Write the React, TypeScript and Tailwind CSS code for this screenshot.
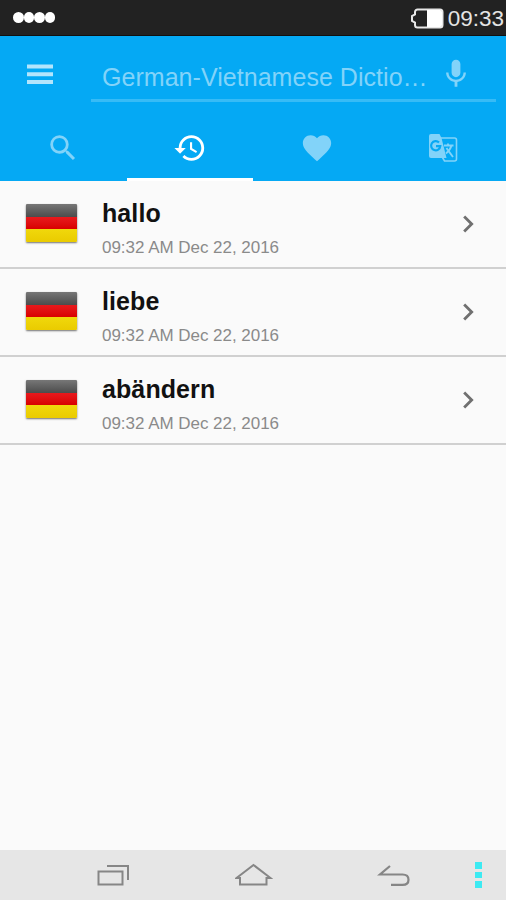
import { clsx } from "clsx";
import type { ReactNode } from "react";
import { MdChevronRight, MdFavorite, MdHistory, MdSearch } from "react-icons/md";

const history = [
    { word: "hallo", date: "09:32 AM Dec 22, 2016" },
    { word: "liebe", date: "09:32 AM Dec 22, 2016" },
    { word: "abändern", date: "09:32 AM Dec 22, 2016" },
];

const StatusBar = () => {
    return (
        <div className="flex h-9 shrink-0 items-center justify-between border-b border-[#111] bg-[#222] pr-0.5 pl-[13px]">
            <div className="flex">
                {Array.from({ length: 4 }, (_, i) => (
                    <span key={i} className="size-[10.600px] rounded-full bg-white" />
                ))}
            </div>
            <div className="flex items-center gap-1 pt-px">
                <svg width="34" height="21" viewBox="0 0 34 21" fill="none">
                    <path d="M7.500 1.500H30a2.500 2.500 0 0 1 2.500 2.500v13a2.500 2.500 0 0 1-2.500 2.500H7.500a2.500 2.500 0 0 1-2.500-2.500V14.500L2 13V8l3-1.500V4a2.500 2.500 0 0 1 2.500-2.500z" stroke="#e8e8e8" strokeWidth="2" />
                    <path d="M17 2h13a2 2 0 0 1 2 2v13a2 2 0 0 1-2 2H17z" fill="#fff" />
                </svg>
                <span className="pt-0.5 text-[22.500px] leading-6 text-[#e4e4e4]">09:33</span>
            </div>
        </div>
    );
};

const Tab = ({ active = false, children }: { active?: boolean; children: ReactNode }) => {
    return (
        <button className={clsx("flex h-full flex-1 items-center justify-center border-b-[3px] pt-[3px] text-[34px]", active ? "border-white text-white" : "border-transparent text-[#82d3f9]")}>
            {children}
        </button>
    );
};

const MicIcon = ({ className }: { className?: string }) => {
    return (
        <svg className={className} viewBox="0 0 24 24" fill="currentColor">
            <path d="M12 14.300c1.700 0 3.100-1.400 3.100-3.100V5a3.100 3.100 0 0 0-6.200 0v6.200c0 1.700 1.400 3.100 3.100 3.100zm5.300-3.300c0 3-2.540 5.100-5.300 5.100S6.700 14 6.700 11H5c0 3.410 2.720 6.230 6 6.720V21h2v-3.280c3.280-.480 6-3.300 6-6.720h-1.700z" />
        </svg>
    );
};

// two overlapping sheets, the back one outlined
const TranslateIcon = () => {
    return (
        <svg width="30" height="30" viewBox="0 0 30 30" fill="none">
            <path d="M13 5H26.500a2 2 0 0 1 2 2V26a2 2 0 0 1-2 2H16.500L13 22" stroke="currentColor" strokeWidth="1.600" />
            <path d="M3 1H11.500L13.500 5L18.500 25H3a2 2 0 0 1-2-2V3a2 2 0 0 1 2-2z" fill="currentColor" />
            <path d="M11 9.500A4.600 4.600 0 1 0 12.300 13.200H8" stroke="#05a9f4" strokeWidth="2.200" />
            <path d="M16 12.500H25.500M20 10.500V12.500M23.500 12.500C22.500 16 20 19 18 20.500M18.500 15C20.500 18 22 20 25 24" stroke="currentColor" strokeWidth="1.900" />
        </svg>
    );
};

const Header = () => {
    return (
        <header className="flex h-[145px] shrink-0 flex-col bg-[#05a9f4]">
            <div className="flex h-[78px] shrink-0 items-start pt-[10px]">
                <svg className="mt-[18px] ml-[27px] text-[#b4e5fc]" width="26" height="21" viewBox="0 0 26 21" fill="currentColor">
                    <path d="M0 .5h26v4H0zM0 8.300h26v4H0zM0 16.100h26v4H0z" />
                </svg>
                <div className="mr-[10px] ml-[38px] flex h-14 flex-1 items-start border-b-[3px] border-[#37bbf6] pl-[11px]">
                    <span className="mt-[16px] text-[25px] leading-[30px] tracking-[0.040px] whitespace-nowrap text-[#82d3f9]">German-Vietnamese Dictio…</span>
                    <MicIcon className="mt-[11px] mr-[23px] ml-auto size-[34px] shrink-0 text-[#82d3f9]" />
                </div>
            </div>
            <nav className="flex flex-1">
                <Tab>
                    <MdSearch />
                </Tab>
                <Tab active>
                    <MdHistory />
                </Tab>
                <Tab>
                    <MdFavorite className="ml-px" />
                </Tab>
                <Tab>
                    <TranslateIcon />
                </Tab>
            </nav>
        </header>
    );
};

const GermanFlag = () => {
    return (
        <div className="flex h-[38px] w-[51px] flex-col overflow-hidden rounded-[1px] shadow-[0_1px_2px_rgba(0,0,0,0.55)]">
            <div className="flex-1 bg-linear-to-b from-[#777] to-[#4c4c4c]" />
            <div className="flex-1 bg-linear-to-b from-[#e8191c] to-[#d80000]" />
            <div className="flex-1 bg-linear-to-b from-[#f0d80c] to-[#eacb00]" />
        </div>
    );
};

const HistoryRow = ({ word, date }: { word: string; date: string }) => {
    return (
        <li className="flex h-[88px] items-start border-b-2 border-[#d0d0d0] pr-[21px] pl-[25.500px]">
            <div className="mt-[23px]">
                <GermanFlag />
            </div>
            <div className="ml-[25.500px] flex-1 pt-[17px]">
                <div className="text-[25px] leading-[30px] font-bold tracking-[0.100px] text-[#111]">{word}</div>
                <div className="mt-[10px] text-[17px] leading-5 tracking-[-0.030px] text-[#8a8a8a]">{date}</div>
            </div>
            <MdChevronRight className="mt-[26px] size-[34px] text-[#707070]" />
        </li>
    );
};

const NavigationBar = () => {
    return (
        <footer className="flex h-[50px] shrink-0 items-center bg-[#e6e6e6] pl-[97px]">
            <svg width="32" height="24" viewBox="0 0 32 24" fill="none" stroke="#868686" strokeWidth="2">
                <path d="M1.500 8.500h24v13h-24z" />
                <path d="M10 3H31V17" />
            </svg>
            <svg className="ml-[106px]" width="38" height="24" viewBox="0 0 38 24" fill="none" stroke="#868686" strokeWidth="2">
                <path d="M1.500 15L18.500 2l17 13h-4v6.500H5V15z" />
            </svg>
            <svg className="ml-[104px]" width="34" height="24" viewBox="0 0 34 24" fill="none" stroke="#868686" strokeWidth="2.200">
                <path d="M13 3L3 11.500h22.500q6 0 6 5.200t-6 5.200H14" />
            </svg>
            <div className="ml-[64px] flex flex-col gap-[3px]">
                <span className="size-[6.500px] bg-[#3deaf2]" />
                <span className="size-[6.500px] bg-[#3deaf2]" />
                <span className="size-[6.500px] bg-[#3deaf2]" />
            </div>
        </footer>
    );
};

export default function App() {
    return (
        <div className="flex h-[900px] w-[506px] flex-col overflow-hidden bg-[#fafafa] font-['Liberation_Sans',Arial,sans-serif]">
            <StatusBar />
            <Header />
            <ul className="flex-1">
                {history.map((item) => (
                    <HistoryRow key={item.word} {...item} />
                ))}
            </ul>
            <NavigationBar />
        </div>
    );
}
